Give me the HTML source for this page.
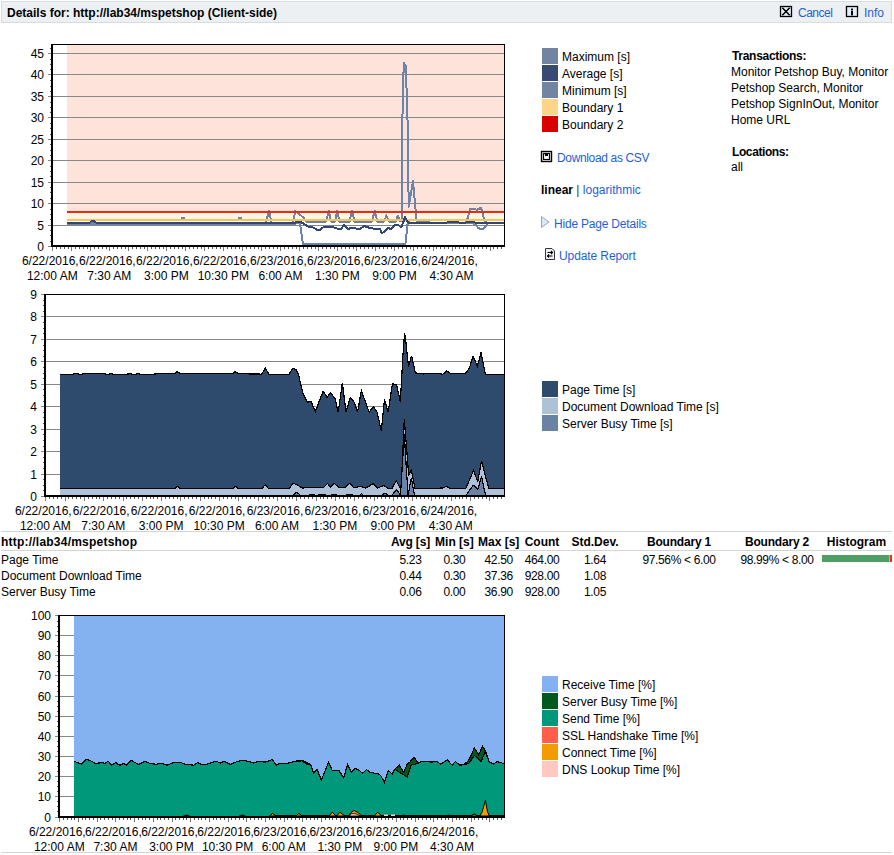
<!DOCTYPE html><html><head><meta charset="utf-8"><title>Details</title><style>
html,body{margin:0;padding:0;background:#fff;width:894px;height:855px;overflow:hidden;}
body{position:relative;font-family:'Liberation Sans',sans-serif;font-size:12px;color:#000;}
.t{position:absolute;white-space:nowrap;line-height:16px;font-size:12px;}
.b{font-weight:bold;}
.lnk{color:#1f5fd6;}
.sw{position:absolute;width:16px;height:16px;}
svg{position:absolute;left:0;top:0;overflow:visible;}
.ax{font-size:12px;fill:#000;}
</style></head><body>
<div style="position:absolute;left:1px;top:1px;width:889px;height:20px;background:#edf0f2;border:1px solid #d9dcdf;"></div>
<div class="t b" style="left:7px;top:5px;">Details for: http://lab34/mspetshop (Client-side)</div>
<svg width="894" height="30"><rect x="780.5" y="6.5" width="11" height="10" fill="#e3eefb" stroke="#000" stroke-width="1.3"/><path d="M782.3,7.8 L789.7,15.2 M789.7,7.8 L782.3,15.2" stroke="#000" stroke-width="1.6"/><rect x="846.5" y="6.5" width="11" height="10" fill="#e3eefb" stroke="#000" stroke-width="1.3"/><rect x="851" y="8.6" width="2" height="1.8" fill="#000"/><rect x="851" y="11" width="2" height="4.4" fill="#000"/></svg>
<div class="t lnk" style="left:798px;top:5px;letter-spacing:-0.5px;">Cancel</div>
<div class="t lnk" style="left:864px;top:5px;">Info</div>
<svg width="894" height="855">
<rect x="67" y="45" width="437" height="167" fill="#fde3d9"/><rect x="67" y="212" width="437" height="8" fill="#fef5e7"/><rect x="53" y="246" width="451" height="1" fill="#878787"/><rect x="53" y="225" width="451" height="1" fill="#878787"/><rect x="53" y="203" width="451" height="1" fill="#878787"/><rect x="53" y="182" width="451" height="1" fill="#878787"/><rect x="53" y="160" width="451" height="1" fill="#878787"/><rect x="53" y="139" width="451" height="1" fill="#878787"/><rect x="53" y="117" width="451" height="1" fill="#878787"/><rect x="53" y="96" width="451" height="1" fill="#878787"/><rect x="53" y="74" width="451" height="1" fill="#878787"/><rect x="53" y="53" width="451" height="1" fill="#878787"/><polyline points="67,222.5 266,222.5 268.9,211 271.6,222.5 293,222.5 295.3,211 297,212 303.8,218 306,221.5 326,221.5 328.8,211 331,221.5 335,221.5 337.2,211 339.5,221.5 349.5,221.5 352,211 354.5,221.5 372,221.5 374.7,211 377.5,221.5 384,221.5 386.4,215.5 389,221.5 395.5,221.5 398,215.5 400.5,221.5 401.8,221 402.6,102 403.8,63 406,66 406.8,100 408.2,140 408.6,207 413,181 416.7,222 430,222.5 466,222.5 467.4,219 470,209 474,208.5 477,210 481,207.5 484,219 486,222.5 504,222.5" fill="none" stroke="#6c84aa" stroke-width="2" stroke-linejoin="round" shape-rendering="crispEdges"/><polyline points="67,223.5 296,223.5 300,223 302.9,244 405.4,244 408,220 410,222.5 467,222.5 471,223 476,224 478,228 482,229.5 486,226 488,222.5 504,223.5" fill="none" stroke="#6c84aa" stroke-width="2" stroke-linejoin="round" shape-rendering="crispEdges"/><rect x="181" y="217" width="4" height="2" fill="#6c84aa"/><rect x="238" y="217" width="4" height="2" fill="#6c84aa"/><rect x="67" y="219" width="437" height="2" fill="#fdc450"/><rect x="67" y="211" width="437" height="2" fill="#ec2a0c"/><polyline points="67,222.5 90,222.5 91.5,221 94,221 95.5,222.5 295.7,222.5 297,221.5 300,221.5 308.7,226.8 313,227.5 317.6,230 320,230 323.9,226.8 330,226.5 341,229.5 344,224.5 348,229 353,227.5 359,229.5 364,226 370,228 376,229 380,229 382,233.5 388,228 391,229 395,225 398,224.5 401,227.5 403,223 405,217 408,222.5 447,222.5 448,221.5 458,221.5 459,222.5 466,222.5 467,221.5 474,221.5 475,222.5 504,222.5" fill="none" stroke="#2f4677" stroke-width="2" stroke-linejoin="round" shape-rendering="crispEdges"/><rect x="51" y="44" width="454" height="1" fill="#000"/><rect x="504" y="44" width="1" height="203" fill="#000"/><rect x="51" y="44" width="2" height="203" fill="#000"/><rect x="51" y="245" width="454" height="2" fill="#000"/><rect x="48" y="246" width="3" height="1" fill="#878787"/><text class="ax" x="44" y="251" text-anchor="end">0</text><rect x="48" y="225" width="3" height="1" fill="#878787"/><text class="ax" x="44" y="230" text-anchor="end">5</text><rect x="48" y="203" width="3" height="1" fill="#878787"/><text class="ax" x="44" y="208" text-anchor="end">10</text><rect x="48" y="182" width="3" height="1" fill="#878787"/><text class="ax" x="44" y="187" text-anchor="end">15</text><rect x="48" y="160" width="3" height="1" fill="#878787"/><text class="ax" x="44" y="165" text-anchor="end">20</text><rect x="48" y="139" width="3" height="1" fill="#878787"/><text class="ax" x="44" y="144" text-anchor="end">25</text><rect x="48" y="117" width="3" height="1" fill="#878787"/><text class="ax" x="44" y="122" text-anchor="end">30</text><rect x="48" y="96" width="3" height="1" fill="#878787"/><text class="ax" x="44" y="101" text-anchor="end">35</text><rect x="48" y="74" width="3" height="1" fill="#878787"/><text class="ax" x="44" y="79" text-anchor="end">40</text><rect x="48" y="53" width="3" height="1" fill="#878787"/><text class="ax" x="44" y="58" text-anchor="end">45</text><rect x="50" y="241" width="1" height="1" fill="#555"/><rect x="50" y="235" width="1" height="1" fill="#555"/><rect x="50" y="230" width="1" height="1" fill="#555"/><rect x="50" y="219" width="1" height="1" fill="#555"/><rect x="50" y="214" width="1" height="1" fill="#555"/><rect x="50" y="209" width="1" height="1" fill="#555"/><rect x="50" y="198" width="1" height="1" fill="#555"/><rect x="50" y="192" width="1" height="1" fill="#555"/><rect x="50" y="187" width="1" height="1" fill="#555"/><rect x="50" y="176" width="1" height="1" fill="#555"/><rect x="50" y="171" width="1" height="1" fill="#555"/><rect x="50" y="166" width="1" height="1" fill="#555"/><rect x="50" y="155" width="1" height="1" fill="#555"/><rect x="50" y="150" width="1" height="1" fill="#555"/><rect x="50" y="144" width="1" height="1" fill="#555"/><rect x="50" y="134" width="1" height="1" fill="#555"/><rect x="50" y="128" width="1" height="1" fill="#555"/><rect x="50" y="123" width="1" height="1" fill="#555"/><rect x="50" y="112" width="1" height="1" fill="#555"/><rect x="50" y="107" width="1" height="1" fill="#555"/><rect x="50" y="102" width="1" height="1" fill="#555"/><rect x="50" y="91" width="1" height="1" fill="#555"/><rect x="50" y="86" width="1" height="1" fill="#555"/><rect x="50" y="80" width="1" height="1" fill="#555"/><rect x="50" y="69" width="1" height="1" fill="#555"/><rect x="50" y="64" width="1" height="1" fill="#555"/><rect x="50" y="59" width="1" height="1" fill="#555"/><rect x="50" y="48" width="1" height="1" fill="#555"/><rect x="52" y="247" width="1" height="4" fill="#777"/><rect x="56" y="247" width="1" height="2" fill="#555"/><rect x="60" y="247" width="1" height="2" fill="#555"/><rect x="64" y="247" width="1" height="2" fill="#555"/><rect x="68" y="247" width="1" height="2" fill="#555"/><rect x="71" y="247" width="1" height="4" fill="#777"/><rect x="75" y="247" width="1" height="2" fill="#555"/><rect x="79" y="247" width="1" height="2" fill="#555"/><rect x="83" y="247" width="1" height="2" fill="#555"/><rect x="87" y="247" width="1" height="2" fill="#555"/><rect x="90" y="247" width="1" height="4" fill="#777"/><rect x="94" y="247" width="1" height="2" fill="#555"/><rect x="98" y="247" width="1" height="2" fill="#555"/><rect x="102" y="247" width="1" height="2" fill="#555"/><rect x="106" y="247" width="1" height="2" fill="#555"/><rect x="109" y="247" width="1" height="4" fill="#777"/><rect x="113" y="247" width="1" height="2" fill="#555"/><rect x="117" y="247" width="1" height="2" fill="#555"/><rect x="121" y="247" width="1" height="2" fill="#555"/><rect x="125" y="247" width="1" height="2" fill="#555"/><rect x="128" y="247" width="1" height="4" fill="#777"/><rect x="132" y="247" width="1" height="2" fill="#555"/><rect x="136" y="247" width="1" height="2" fill="#555"/><rect x="140" y="247" width="1" height="2" fill="#555"/><rect x="144" y="247" width="1" height="2" fill="#555"/><rect x="147" y="247" width="1" height="4" fill="#777"/><rect x="151" y="247" width="1" height="2" fill="#555"/><rect x="155" y="247" width="1" height="2" fill="#555"/><rect x="159" y="247" width="1" height="2" fill="#555"/><rect x="163" y="247" width="1" height="2" fill="#555"/><rect x="166" y="247" width="1" height="4" fill="#777"/><rect x="170" y="247" width="1" height="2" fill="#555"/><rect x="174" y="247" width="1" height="2" fill="#555"/><rect x="178" y="247" width="1" height="2" fill="#555"/><rect x="182" y="247" width="1" height="2" fill="#555"/><rect x="185" y="247" width="1" height="4" fill="#777"/><rect x="189" y="247" width="1" height="2" fill="#555"/><rect x="193" y="247" width="1" height="2" fill="#555"/><rect x="197" y="247" width="1" height="2" fill="#555"/><rect x="201" y="247" width="1" height="2" fill="#555"/><rect x="204" y="247" width="1" height="4" fill="#777"/><rect x="208" y="247" width="1" height="2" fill="#555"/><rect x="212" y="247" width="1" height="2" fill="#555"/><rect x="216" y="247" width="1" height="2" fill="#555"/><rect x="220" y="247" width="1" height="2" fill="#555"/><rect x="223" y="247" width="1" height="4" fill="#777"/><rect x="227" y="247" width="1" height="2" fill="#555"/><rect x="231" y="247" width="1" height="2" fill="#555"/><rect x="235" y="247" width="1" height="2" fill="#555"/><rect x="239" y="247" width="1" height="2" fill="#555"/><rect x="242" y="247" width="1" height="4" fill="#777"/><rect x="246" y="247" width="1" height="2" fill="#555"/><rect x="250" y="247" width="1" height="2" fill="#555"/><rect x="254" y="247" width="1" height="2" fill="#555"/><rect x="258" y="247" width="1" height="2" fill="#555"/><rect x="261" y="247" width="1" height="4" fill="#777"/><rect x="265" y="247" width="1" height="2" fill="#555"/><rect x="269" y="247" width="1" height="2" fill="#555"/><rect x="273" y="247" width="1" height="2" fill="#555"/><rect x="277" y="247" width="1" height="2" fill="#555"/><rect x="280" y="247" width="1" height="4" fill="#777"/><rect x="284" y="247" width="1" height="2" fill="#555"/><rect x="288" y="247" width="1" height="2" fill="#555"/><rect x="292" y="247" width="1" height="2" fill="#555"/><rect x="296" y="247" width="1" height="2" fill="#555"/><rect x="299" y="247" width="1" height="4" fill="#777"/><rect x="303" y="247" width="1" height="2" fill="#555"/><rect x="307" y="247" width="1" height="2" fill="#555"/><rect x="311" y="247" width="1" height="2" fill="#555"/><rect x="315" y="247" width="1" height="2" fill="#555"/><rect x="318" y="247" width="1" height="4" fill="#777"/><rect x="322" y="247" width="1" height="2" fill="#555"/><rect x="326" y="247" width="1" height="2" fill="#555"/><rect x="330" y="247" width="1" height="2" fill="#555"/><rect x="334" y="247" width="1" height="2" fill="#555"/><rect x="337" y="247" width="1" height="4" fill="#777"/><rect x="341" y="247" width="1" height="2" fill="#555"/><rect x="345" y="247" width="1" height="2" fill="#555"/><rect x="349" y="247" width="1" height="2" fill="#555"/><rect x="353" y="247" width="1" height="2" fill="#555"/><rect x="356" y="247" width="1" height="4" fill="#777"/><rect x="360" y="247" width="1" height="2" fill="#555"/><rect x="364" y="247" width="1" height="2" fill="#555"/><rect x="368" y="247" width="1" height="2" fill="#555"/><rect x="372" y="247" width="1" height="2" fill="#555"/><rect x="375" y="247" width="1" height="4" fill="#777"/><rect x="379" y="247" width="1" height="2" fill="#555"/><rect x="383" y="247" width="1" height="2" fill="#555"/><rect x="387" y="247" width="1" height="2" fill="#555"/><rect x="391" y="247" width="1" height="2" fill="#555"/><rect x="394" y="247" width="1" height="4" fill="#777"/><rect x="398" y="247" width="1" height="2" fill="#555"/><rect x="402" y="247" width="1" height="2" fill="#555"/><rect x="406" y="247" width="1" height="2" fill="#555"/><rect x="410" y="247" width="1" height="2" fill="#555"/><rect x="413" y="247" width="1" height="4" fill="#777"/><rect x="417" y="247" width="1" height="2" fill="#555"/><rect x="421" y="247" width="1" height="2" fill="#555"/><rect x="425" y="247" width="1" height="2" fill="#555"/><rect x="429" y="247" width="1" height="2" fill="#555"/><rect x="433" y="247" width="1" height="4" fill="#777"/><rect x="436" y="247" width="1" height="2" fill="#555"/><rect x="440" y="247" width="1" height="2" fill="#555"/><rect x="444" y="247" width="1" height="2" fill="#555"/><rect x="448" y="247" width="1" height="2" fill="#555"/><rect x="452" y="247" width="1" height="4" fill="#777"/><rect x="455" y="247" width="1" height="2" fill="#555"/><rect x="459" y="247" width="1" height="2" fill="#555"/><rect x="463" y="247" width="1" height="2" fill="#555"/><rect x="467" y="247" width="1" height="2" fill="#555"/><rect x="471" y="247" width="1" height="4" fill="#777"/><rect x="474" y="247" width="1" height="2" fill="#555"/><rect x="478" y="247" width="1" height="2" fill="#555"/><rect x="482" y="247" width="1" height="2" fill="#555"/><rect x="486" y="247" width="1" height="2" fill="#555"/><rect x="490" y="247" width="1" height="4" fill="#777"/><rect x="493" y="247" width="1" height="2" fill="#555"/><rect x="497" y="247" width="1" height="2" fill="#555"/><rect x="501" y="247" width="1" height="2" fill="#555"/><text class="ax" x="50.3" y="265" text-anchor="middle">6/22/2016,</text><text class="ax" x="52.3" y="280" text-anchor="middle">12:00 AM</text><text class="ax" x="107.33" y="265" text-anchor="middle">6/22/2016,</text><text class="ax" x="109.33" y="280" text-anchor="middle">7:30 AM</text><text class="ax" x="164.36" y="265" text-anchor="middle">6/22/2016,</text><text class="ax" x="166.36" y="280" text-anchor="middle">3:00 PM</text><text class="ax" x="221.39" y="265" text-anchor="middle">6/22/2016,</text><text class="ax" x="223.39" y="280" text-anchor="middle">10:30 PM</text><text class="ax" x="278.42" y="265" text-anchor="middle">6/23/2016,</text><text class="ax" x="280.42" y="280" text-anchor="middle">6:00 AM</text><text class="ax" x="335.45" y="265" text-anchor="middle">6/23/2016,</text><text class="ax" x="337.45" y="280" text-anchor="middle">1:30 PM</text><text class="ax" x="392.48" y="265" text-anchor="middle">6/23/2016,</text><text class="ax" x="394.48" y="280" text-anchor="middle">9:00 PM</text><text class="ax" x="449.51" y="265" text-anchor="middle">6/24/2016,</text><text class="ax" x="451.51" y="280" text-anchor="middle">4:30 AM</text>
<rect x="46" y="496" width="458" height="1" fill="#878787"/><rect x="46" y="474" width="458" height="1" fill="#878787"/><rect x="46" y="451" width="458" height="1" fill="#878787"/><rect x="46" y="429" width="458" height="1" fill="#878787"/><rect x="46" y="406" width="458" height="1" fill="#878787"/><rect x="46" y="384" width="458" height="1" fill="#878787"/><rect x="46" y="361" width="458" height="1" fill="#878787"/><rect x="46" y="339" width="458" height="1" fill="#878787"/><rect x="46" y="316" width="458" height="1" fill="#878787"/><polygon points="60,374.5 73.8,374.5 74,373.5 78.5,373.5 78.7,374.5 82,374.5 82.2,373.5 105.5,373.5 105.7,374.5 109,374.5 109.2,373.5 112.6,373.5 112.8,374.5 127.9,374.5 128.1,373.5 131.4,373.5 131.6,374.5 136,374.5 136.2,373.5 139.6,373.5 139.8,374.5 154.9,374.5 155.1,373.5 175,373.5 177,371.5 180,373.5 233,373.5 235,371.5 238,373.5 251,374 260,374 261.6,374.5 265.3,368.2 269,374.5 289,374.5 292.6,368.2 296.3,369.7 298.4,374.5 303.2,394 307.4,402.4 311,401.3 315.3,411.8 318.4,403.4 323.2,391.3 327.1,397.4 330.3,392.6 335,398.4 338.2,412.1 342.4,382.6 346,412.1 350.3,397.4 354.5,402.6 357.6,412.1 361.3,390.5 369.2,412.1 373.4,406.8 377.1,412.1 381.3,431 384.5,399.5 388.2,412.1 392.4,383.7 396.6,384.7 400.3,401.6 401.8,376.6 402.6,359.4 404.6,332.9 405.5,338.5 407.3,355.7 408.5,366.8 411.6,355.7 415.3,372.9 421.5,373.5 423.9,374.1 425.8,373.2 440.5,373.2 442.4,374.4 446.7,371.1 450.4,373.2 465.7,373.2 469.4,368 473.1,356.3 477.4,366.1 481.1,352.6 485.4,374.8 487.3,374.1 504,374.1 504,495 60,495" fill="#2e4a6c"/><polyline points="60,374.5 73.8,374.5 74,373.5 78.5,373.5 78.7,374.5 82,374.5 82.2,373.5 105.5,373.5 105.7,374.5 109,374.5 109.2,373.5 112.6,373.5 112.8,374.5 127.9,374.5 128.1,373.5 131.4,373.5 131.6,374.5 136,374.5 136.2,373.5 139.6,373.5 139.8,374.5 154.9,374.5 155.1,373.5 175,373.5 177,371.5 180,373.5 233,373.5 235,371.5 238,373.5 251,374 260,374 261.6,374.5 265.3,368.2 269,374.5 289,374.5 292.6,368.2 296.3,369.7 298.4,374.5 303.2,394 307.4,402.4 311,401.3 315.3,411.8 318.4,403.4 323.2,391.3 327.1,397.4 330.3,392.6 335,398.4 338.2,412.1 342.4,382.6 346,412.1 350.3,397.4 354.5,402.6 357.6,412.1 361.3,390.5 369.2,412.1 373.4,406.8 377.1,412.1 381.3,431 384.5,399.5 388.2,412.1 392.4,383.7 396.6,384.7 400.3,401.6 401.8,376.6 402.6,359.4 404.6,332.9 405.5,338.5 407.3,355.7 408.5,366.8 411.6,355.7 415.3,372.9 421.5,373.5 423.9,374.1 425.8,373.2 440.5,373.2 442.4,374.4 446.7,371.1 450.4,373.2 465.7,373.2 469.4,368 473.1,356.3 477.4,366.1 481.1,352.6 485.4,374.8 487.3,374.1 504,374.1" fill="none" stroke="#000" stroke-width="1.2" shape-rendering="crispEdges"/><polygon points="60,488.5 175,488.5 177,486 180,488.5 233,488.5 235,486 238,488.5 262,488.5 265.3,484.5 268.5,488.5 289.4,488.1 292.8,483.4 296.8,484.5 302.1,488.1 308.9,487.4 323.6,487.4 327.7,483.4 330.3,487.4 334.4,483.4 339.1,487.7 344.4,487.7 349.8,483.4 353.8,487.7 360.5,486.4 365.9,488.1 373.3,483.4 377.3,488.1 384,485.4 387.4,488.1 392.1,488.1 396.4,480.7 400.5,488.9 401.1,488.9 404.3,419.3 408.7,474.9 411.3,470.2 415.1,488.9 442.9,488 446.5,486.2 449.8,488.4 465.8,488.4 473.5,470.5 477.8,481.5 481.5,460.7 488.7,488.4 504,488.4 504,495 60,495" fill="#afc1d7"/><polyline points="60,488.5 175,488.5 177,486 180,488.5 233,488.5 235,486 238,488.5 262,488.5 265.3,484.5 268.5,488.5 289.4,488.1 292.8,483.4 296.8,484.5 302.1,488.1 308.9,487.4 323.6,487.4 327.7,483.4 330.3,487.4 334.4,483.4 339.1,487.7 344.4,487.7 349.8,483.4 353.8,487.7 360.5,486.4 365.9,488.1 373.3,483.4 377.3,488.1 384,485.4 387.4,488.1 392.1,488.1 396.4,480.7 400.5,488.9 401.1,488.9 404.3,419.3 408.7,474.9 411.3,470.2 415.1,488.9 442.9,488 446.5,486.2 449.8,488.4 465.8,488.4 473.5,470.5 477.8,481.5 481.5,460.7 488.7,488.4 504,488.4" fill="none" stroke="#000" stroke-width="1.2" shape-rendering="crispEdges"/><polygon points="60,495 293.4,495 296.8,492.1 300,495 360,495 361.5,493.5 363,495 382.7,495 384.7,492.8 387.4,495 392.3,495 396.4,489.5 400.5,495 404.3,434 406.3,468 408.1,495 411.3,478 414.5,495 466.2,495 473.5,485.1 477.8,489.5 481.5,476.4 485.5,495 504,495 504,495 60,495" fill="#6a83a4"/><path d="M293.4,495L296.8,492.1M296.8,492.1L300,495M360,495L361.5,493.5M361.5,493.5L363,495M382.7,495L384.7,492.8M384.7,492.8L387.4,495M392.3,495L396.4,489.5M396.4,489.5L400.5,495M400.5,495L404.3,434M404.3,434L406.3,468M406.3,468L408.1,495M408.1,495L411.3,478M411.3,478L414.5,495M466.2,495L473.5,485.1M473.5,485.1L477.8,489.5M477.8,489.5L481.5,476.4M481.5,476.4L485.5,495" fill="none" stroke="#000" stroke-width="1.2" shape-rendering="crispEdges"/><rect x="309" y="494" width="6" height="1.5" fill="#000"/><rect x="318" y="494" width="8" height="1.5" fill="#000"/><rect x="331" y="494" width="6" height="1.5" fill="#000"/><rect x="346" y="494" width="7" height="1.5" fill="#000"/><rect x="44" y="294" width="461" height="1" fill="#000"/><rect x="504" y="294" width="1" height="203" fill="#000"/><rect x="44" y="294" width="2" height="203" fill="#000"/><rect x="44" y="495" width="461" height="2" fill="#000"/><rect x="41" y="496" width="3" height="1" fill="#878787"/><text class="ax" x="37" y="501" text-anchor="end">0</text><rect x="41" y="474" width="3" height="1" fill="#878787"/><text class="ax" x="37" y="479" text-anchor="end">1</text><rect x="41" y="451" width="3" height="1" fill="#878787"/><text class="ax" x="37" y="456" text-anchor="end">2</text><rect x="41" y="429" width="3" height="1" fill="#878787"/><text class="ax" x="37" y="434" text-anchor="end">3</text><rect x="41" y="406" width="3" height="1" fill="#878787"/><text class="ax" x="37" y="411" text-anchor="end">4</text><rect x="41" y="384" width="3" height="1" fill="#878787"/><text class="ax" x="37" y="389" text-anchor="end">5</text><rect x="41" y="361" width="3" height="1" fill="#878787"/><text class="ax" x="37" y="366" text-anchor="end">6</text><rect x="41" y="339" width="3" height="1" fill="#878787"/><text class="ax" x="37" y="344" text-anchor="end">7</text><rect x="41" y="316" width="3" height="1" fill="#878787"/><text class="ax" x="37" y="321" text-anchor="end">8</text><rect x="41" y="294" width="3" height="1" fill="#878787"/><text class="ax" x="37" y="299" text-anchor="end">9</text><rect x="43" y="490" width="1" height="1" fill="#555"/><rect x="43" y="485" width="1" height="1" fill="#555"/><rect x="43" y="479" width="1" height="1" fill="#555"/><rect x="43" y="468" width="1" height="1" fill="#555"/><rect x="43" y="462" width="1" height="1" fill="#555"/><rect x="43" y="457" width="1" height="1" fill="#555"/><rect x="43" y="446" width="1" height="1" fill="#555"/><rect x="43" y="440" width="1" height="1" fill="#555"/><rect x="43" y="434" width="1" height="1" fill="#555"/><rect x="43" y="423" width="1" height="1" fill="#555"/><rect x="43" y="417" width="1" height="1" fill="#555"/><rect x="43" y="412" width="1" height="1" fill="#555"/><rect x="43" y="401" width="1" height="1" fill="#555"/><rect x="43" y="395" width="1" height="1" fill="#555"/><rect x="43" y="389" width="1" height="1" fill="#555"/><rect x="43" y="378" width="1" height="1" fill="#555"/><rect x="43" y="373" width="1" height="1" fill="#555"/><rect x="43" y="367" width="1" height="1" fill="#555"/><rect x="43" y="356" width="1" height="1" fill="#555"/><rect x="43" y="350" width="1" height="1" fill="#555"/><rect x="43" y="345" width="1" height="1" fill="#555"/><rect x="43" y="333" width="1" height="1" fill="#555"/><rect x="43" y="328" width="1" height="1" fill="#555"/><rect x="43" y="322" width="1" height="1" fill="#555"/><rect x="43" y="311" width="1" height="1" fill="#555"/><rect x="43" y="305" width="1" height="1" fill="#555"/><rect x="43" y="300" width="1" height="1" fill="#555"/><rect x="45" y="497" width="1" height="4" fill="#777"/><rect x="49" y="497" width="1" height="2" fill="#555"/><rect x="53" y="497" width="1" height="2" fill="#555"/><rect x="57" y="497" width="1" height="2" fill="#555"/><rect x="61" y="497" width="1" height="2" fill="#555"/><rect x="65" y="497" width="1" height="4" fill="#777"/><rect x="68" y="497" width="1" height="2" fill="#555"/><rect x="72" y="497" width="1" height="2" fill="#555"/><rect x="76" y="497" width="1" height="2" fill="#555"/><rect x="80" y="497" width="1" height="2" fill="#555"/><rect x="84" y="497" width="1" height="4" fill="#777"/><rect x="88" y="497" width="1" height="2" fill="#555"/><rect x="92" y="497" width="1" height="2" fill="#555"/><rect x="96" y="497" width="1" height="2" fill="#555"/><rect x="99" y="497" width="1" height="2" fill="#555"/><rect x="103" y="497" width="1" height="4" fill="#777"/><rect x="107" y="497" width="1" height="2" fill="#555"/><rect x="111" y="497" width="1" height="2" fill="#555"/><rect x="115" y="497" width="1" height="2" fill="#555"/><rect x="119" y="497" width="1" height="2" fill="#555"/><rect x="123" y="497" width="1" height="4" fill="#777"/><rect x="126" y="497" width="1" height="2" fill="#555"/><rect x="130" y="497" width="1" height="2" fill="#555"/><rect x="134" y="497" width="1" height="2" fill="#555"/><rect x="138" y="497" width="1" height="2" fill="#555"/><rect x="142" y="497" width="1" height="4" fill="#777"/><rect x="146" y="497" width="1" height="2" fill="#555"/><rect x="150" y="497" width="1" height="2" fill="#555"/><rect x="153" y="497" width="1" height="2" fill="#555"/><rect x="157" y="497" width="1" height="2" fill="#555"/><rect x="161" y="497" width="1" height="4" fill="#777"/><rect x="165" y="497" width="1" height="2" fill="#555"/><rect x="169" y="497" width="1" height="2" fill="#555"/><rect x="173" y="497" width="1" height="2" fill="#555"/><rect x="177" y="497" width="1" height="2" fill="#555"/><rect x="180" y="497" width="1" height="4" fill="#777"/><rect x="184" y="497" width="1" height="2" fill="#555"/><rect x="188" y="497" width="1" height="2" fill="#555"/><rect x="192" y="497" width="1" height="2" fill="#555"/><rect x="196" y="497" width="1" height="2" fill="#555"/><rect x="200" y="497" width="1" height="4" fill="#777"/><rect x="204" y="497" width="1" height="2" fill="#555"/><rect x="208" y="497" width="1" height="2" fill="#555"/><rect x="211" y="497" width="1" height="2" fill="#555"/><rect x="215" y="497" width="1" height="2" fill="#555"/><rect x="219" y="497" width="1" height="4" fill="#777"/><rect x="223" y="497" width="1" height="2" fill="#555"/><rect x="227" y="497" width="1" height="2" fill="#555"/><rect x="231" y="497" width="1" height="2" fill="#555"/><rect x="235" y="497" width="1" height="2" fill="#555"/><rect x="238" y="497" width="1" height="4" fill="#777"/><rect x="242" y="497" width="1" height="2" fill="#555"/><rect x="246" y="497" width="1" height="2" fill="#555"/><rect x="250" y="497" width="1" height="2" fill="#555"/><rect x="254" y="497" width="1" height="2" fill="#555"/><rect x="258" y="497" width="1" height="4" fill="#777"/><rect x="262" y="497" width="1" height="2" fill="#555"/><rect x="265" y="497" width="1" height="2" fill="#555"/><rect x="269" y="497" width="1" height="2" fill="#555"/><rect x="273" y="497" width="1" height="2" fill="#555"/><rect x="277" y="497" width="1" height="4" fill="#777"/><rect x="281" y="497" width="1" height="2" fill="#555"/><rect x="285" y="497" width="1" height="2" fill="#555"/><rect x="289" y="497" width="1" height="2" fill="#555"/><rect x="292" y="497" width="1" height="2" fill="#555"/><rect x="296" y="497" width="1" height="4" fill="#777"/><rect x="300" y="497" width="1" height="2" fill="#555"/><rect x="304" y="497" width="1" height="2" fill="#555"/><rect x="308" y="497" width="1" height="2" fill="#555"/><rect x="312" y="497" width="1" height="2" fill="#555"/><rect x="316" y="497" width="1" height="4" fill="#777"/><rect x="320" y="497" width="1" height="2" fill="#555"/><rect x="323" y="497" width="1" height="2" fill="#555"/><rect x="327" y="497" width="1" height="2" fill="#555"/><rect x="331" y="497" width="1" height="2" fill="#555"/><rect x="335" y="497" width="1" height="4" fill="#777"/><rect x="339" y="497" width="1" height="2" fill="#555"/><rect x="343" y="497" width="1" height="2" fill="#555"/><rect x="347" y="497" width="1" height="2" fill="#555"/><rect x="350" y="497" width="1" height="2" fill="#555"/><rect x="354" y="497" width="1" height="4" fill="#777"/><rect x="358" y="497" width="1" height="2" fill="#555"/><rect x="362" y="497" width="1" height="2" fill="#555"/><rect x="366" y="497" width="1" height="2" fill="#555"/><rect x="370" y="497" width="1" height="2" fill="#555"/><rect x="374" y="497" width="1" height="4" fill="#777"/><rect x="377" y="497" width="1" height="2" fill="#555"/><rect x="381" y="497" width="1" height="2" fill="#555"/><rect x="385" y="497" width="1" height="2" fill="#555"/><rect x="389" y="497" width="1" height="2" fill="#555"/><rect x="393" y="497" width="1" height="4" fill="#777"/><rect x="397" y="497" width="1" height="2" fill="#555"/><rect x="401" y="497" width="1" height="2" fill="#555"/><rect x="404" y="497" width="1" height="2" fill="#555"/><rect x="408" y="497" width="1" height="2" fill="#555"/><rect x="412" y="497" width="1" height="4" fill="#777"/><rect x="416" y="497" width="1" height="2" fill="#555"/><rect x="420" y="497" width="1" height="2" fill="#555"/><rect x="424" y="497" width="1" height="2" fill="#555"/><rect x="428" y="497" width="1" height="2" fill="#555"/><rect x="431" y="497" width="1" height="4" fill="#777"/><rect x="435" y="497" width="1" height="2" fill="#555"/><rect x="439" y="497" width="1" height="2" fill="#555"/><rect x="443" y="497" width="1" height="2" fill="#555"/><rect x="447" y="497" width="1" height="2" fill="#555"/><rect x="451" y="497" width="1" height="4" fill="#777"/><rect x="455" y="497" width="1" height="2" fill="#555"/><rect x="459" y="497" width="1" height="2" fill="#555"/><rect x="462" y="497" width="1" height="2" fill="#555"/><rect x="466" y="497" width="1" height="2" fill="#555"/><rect x="470" y="497" width="1" height="4" fill="#777"/><rect x="474" y="497" width="1" height="2" fill="#555"/><rect x="478" y="497" width="1" height="2" fill="#555"/><rect x="482" y="497" width="1" height="2" fill="#555"/><rect x="486" y="497" width="1" height="2" fill="#555"/><rect x="489" y="497" width="1" height="4" fill="#777"/><rect x="493" y="497" width="1" height="2" fill="#555"/><rect x="497" y="497" width="1" height="2" fill="#555"/><rect x="501" y="497" width="1" height="2" fill="#555"/><text class="ax" x="43.3" y="515" text-anchor="middle">6/22/2016,</text><text class="ax" x="45.3" y="530" text-anchor="middle">12:00 AM</text><text class="ax" x="101.23" y="515" text-anchor="middle">6/22/2016,</text><text class="ax" x="103.23" y="530" text-anchor="middle">7:30 AM</text><text class="ax" x="159.16" y="515" text-anchor="middle">6/22/2016,</text><text class="ax" x="161.16" y="530" text-anchor="middle">3:00 PM</text><text class="ax" x="217.09" y="515" text-anchor="middle">6/22/2016,</text><text class="ax" x="219.09" y="530" text-anchor="middle">10:30 PM</text><text class="ax" x="275.02" y="515" text-anchor="middle">6/23/2016,</text><text class="ax" x="277.02" y="530" text-anchor="middle">6:00 AM</text><text class="ax" x="332.95" y="515" text-anchor="middle">6/23/2016,</text><text class="ax" x="334.95" y="530" text-anchor="middle">1:30 PM</text><text class="ax" x="390.88" y="515" text-anchor="middle">6/23/2016,</text><text class="ax" x="392.88" y="530" text-anchor="middle">9:00 PM</text><text class="ax" x="448.81" y="515" text-anchor="middle">6/24/2016,</text><text class="ax" x="450.81" y="530" text-anchor="middle">4:30 AM</text>
<rect x="60" y="817" width="444" height="1" fill="#878787"/><rect x="60" y="796" width="444" height="1" fill="#878787"/><rect x="60" y="776" width="444" height="1" fill="#878787"/><rect x="60" y="756" width="444" height="1" fill="#878787"/><rect x="60" y="736" width="444" height="1" fill="#878787"/><rect x="60" y="716" width="444" height="1" fill="#878787"/><rect x="60" y="696" width="444" height="1" fill="#878787"/><rect x="60" y="675" width="444" height="1" fill="#878787"/><rect x="60" y="655" width="444" height="1" fill="#878787"/><rect x="60" y="635" width="444" height="1" fill="#878787"/><rect x="74" y="616" width="430" height="200" fill="#84b2f0"/><polygon points="74,761.2 77.4,762.6 81.4,764.2 86.1,759.5 90.1,760.4 95.5,763.5 102.2,762.6 104.9,763.5 108.3,761.2 111.6,765.2 115.6,762.6 119.7,765.2 123.7,763.5 126.4,764.8 131.1,760.4 138.5,764.4 145.2,761.2 149.9,763.5 155.9,764.2 161.3,763.5 167.3,765.2 173.4,762.6 181.4,762.8 185,764.2 193.7,765.2 197.8,762.6 201.1,764.2 206.5,764.2 215.9,761.2 220.6,763.1 223.9,761.2 230.6,764.4 237.3,761.5 242,760.4 248.1,761.2 253.5,763.1 257.5,761.5 265.5,762.1 272.2,759.5 276.3,765.2 279,763.5 288.4,763.1 295.1,761.5 300,760.2 302.2,760.2 306.7,762.8 310.6,764.2 313.4,772.9 317.3,769.6 321.3,780.2 328.5,762.3 332.4,770.7 339.1,770.7 343.6,778 347.5,764.5 351.5,772.4 354.8,768.5 358.2,769.6 362.6,773.3 366.6,769.6 369.9,772.4 378.3,774 380.5,775.2 384.5,782.4 388.4,770.7 392.3,774 395,768.9 399.3,765.2 403.6,772.2 407.3,764 409.8,762.1 414.1,757.2 417.8,762.8 421.5,761.5 427.6,761.5 431.9,762.1 436.2,761.2 440.5,764 447.3,760 452.2,765.2 455.3,761.5 459.6,765.2 463.9,764.6 468.8,760.3 474.4,748 478.7,754.8 482.6,746.2 486.1,752.3 489.1,762.1 493.4,764 497.1,761.5 503.3,763.4 504,763.4 504,816 74,816" fill="#005a1e"/><polyline points="74,761.2 77.4,762.6 81.4,764.2 86.1,759.5 90.1,760.4 95.5,763.5 102.2,762.6 104.9,763.5 108.3,761.2 111.6,765.2 115.6,762.6 119.7,765.2 123.7,763.5 126.4,764.8 131.1,760.4 138.5,764.4 145.2,761.2 149.9,763.5 155.9,764.2 161.3,763.5 167.3,765.2 173.4,762.6 181.4,762.8 185,764.2 193.7,765.2 197.8,762.6 201.1,764.2 206.5,764.2 215.9,761.2 220.6,763.1 223.9,761.2 230.6,764.4 237.3,761.5 242,760.4 248.1,761.2 253.5,763.1 257.5,761.5 265.5,762.1 272.2,759.5 276.3,765.2 279,763.5 288.4,763.1 295.1,761.5 300,760.2 302.2,760.2 306.7,762.8 310.6,764.2 313.4,772.9 317.3,769.6 321.3,780.2 328.5,762.3 332.4,770.7 339.1,770.7 343.6,778 347.5,764.5 351.5,772.4 354.8,768.5 358.2,769.6 362.6,773.3 366.6,769.6 369.9,772.4 378.3,774 380.5,775.2 384.5,782.4 388.4,770.7 392.3,774 395,768.9 399.3,765.2 403.6,772.2 407.3,764 409.8,762.1 414.1,757.2 417.8,762.8 421.5,761.5 427.6,761.5 431.9,762.1 436.2,761.2 440.5,764 447.3,760 452.2,765.2 455.3,761.5 459.6,765.2 463.9,764.6 468.8,760.3 474.4,748 478.7,754.8 482.6,746.2 486.1,752.3 489.1,762.1 493.4,764 497.1,761.5 503.3,763.4 504,763.4" fill="none" stroke="#000" stroke-width="1.2" shape-rendering="crispEdges"/><polygon points="74,761.2 77.4,762.6 81.4,764.2 86.1,759.5 90.1,760.4 95.5,763.5 102.2,762.6 104.9,763.5 108.3,761.2 111.6,765.2 115.6,762.6 119.7,765.2 123.7,763.5 126.4,764.8 131.1,760.4 138.5,764.4 145.2,761.2 149.9,763.5 155.9,764.2 161.3,763.5 167.3,765.2 173.4,762.6 181.4,762.8 185,764.2 193.7,765.2 197.8,762.6 201.1,764.2 206.5,764.2 215.9,761.2 220.6,763.1 223.9,761.2 230.6,764.4 237.3,761.5 242,760.4 248.1,761.2 253.5,763.1 257.5,761.5 265.5,762.1 272.2,759.5 276.3,765.2 279,763.5 288.4,763.1 295.1,761.5 301.8,760.8 306.7,764 310.6,764.5 313.4,772.9 317.3,769.6 321.3,780.2 328.5,762.3 332.4,770.7 339.1,770.7 343.6,778 347.5,764.5 351.5,772.4 354.8,768.5 358.2,769.6 362.6,773.3 366.6,769.6 369.9,772.4 378.3,774 380.5,775.2 384.5,782.4 388.4,770.7 392.3,774 395,769.5 407.3,776.9 411,765.2 417.8,763.4 421.5,761.5 427.6,761.5 431.9,762.1 436.2,761.2 440.5,764 447.3,760 452.2,765.2 455.3,761.5 459.6,765.2 463.9,764.6 468.8,763.4 474.4,755.4 481.1,761.5 485.4,751.7 489.1,762.1 493.4,764 497.1,761.5 503.3,763.4 504,763.4 504,816 74,816" fill="#00987a"/><polyline points="74,761.2 77.4,762.6 81.4,764.2 86.1,759.5 90.1,760.4 95.5,763.5 102.2,762.6 104.9,763.5 108.3,761.2 111.6,765.2 115.6,762.6 119.7,765.2 123.7,763.5 126.4,764.8 131.1,760.4 138.5,764.4 145.2,761.2 149.9,763.5 155.9,764.2 161.3,763.5 167.3,765.2 173.4,762.6 181.4,762.8 185,764.2 193.7,765.2 197.8,762.6 201.1,764.2 206.5,764.2 215.9,761.2 220.6,763.1 223.9,761.2 230.6,764.4 237.3,761.5 242,760.4 248.1,761.2 253.5,763.1 257.5,761.5 265.5,762.1 272.2,759.5 276.3,765.2 279,763.5 288.4,763.1 295.1,761.5 301.8,760.8 306.7,764 310.6,764.5 313.4,772.9 317.3,769.6 321.3,780.2 328.5,762.3 332.4,770.7 339.1,770.7 343.6,778 347.5,764.5 351.5,772.4 354.8,768.5 358.2,769.6 362.6,773.3 366.6,769.6 369.9,772.4 378.3,774 380.5,775.2 384.5,782.4 388.4,770.7 392.3,774 395,769.5 407.3,776.9 411,765.2 417.8,763.4 421.5,761.5 427.6,761.5 431.9,762.1 436.2,761.2 440.5,764 447.3,760 452.2,765.2 455.3,761.5 459.6,765.2 463.9,764.6 468.8,763.4 474.4,755.4 481.1,761.5 485.4,751.7 489.1,762.1 493.4,764 497.1,761.5 503.3,763.4 504,763.4" fill="none" stroke="#000" stroke-width="1.2" shape-rendering="crispEdges"/><rect x="74" y="815" width="430" height="1.2" fill="#000" opacity="0.0"/><polyline points="275,815.5 504,815.5" fill="none" stroke="#000" stroke-width="1.2" shape-rendering="crispEdges"/><polygon points="269.7,816 272.5,813.5 275.7,816" fill="#f29c00" stroke="#000" stroke-width="1"/><polygon points="296,816 298.8,813.5 302,816" fill="#f29c00" stroke="#000" stroke-width="1"/><polygon points="329,816 332.3,812.2 336,816" fill="#f29c00" stroke="#000" stroke-width="1"/><polygon points="336.7,816 339.9,812.2 344.6,816" fill="#f29c00" stroke="#000" stroke-width="1"/><polygon points="374.3,816 377.8,812.2 381.4,816" fill="#f29c00" stroke="#000" stroke-width="1"/><polygon points="471,816 474.2,814 477.5,816" fill="#f29c00" stroke="#000" stroke-width="1"/><polygon points="471,816 474.2,814 477.5,816" fill="#f29c00" stroke="#000" stroke-width="1"/><polygon points="348.5,816 351,812.5 354,810.5 358,812.5 361.8,816" fill="#f29c00" stroke="#000" stroke-width="1"/><polygon points="349.5,816 351.5,813.5 356,813.8 360.5,816" fill="#ffc8c0" stroke="#000" stroke-width="0.8"/><polygon points="479.9,816 482.2,811.7 485.4,800.3 487.5,811.7 489.3,816" fill="#f29c00" stroke="#000" stroke-width="1"/><polygon points="182.5,816 186.5,814.6 190.5,816" fill="#000"/><polygon points="238.4,816 242.4,814.6 246.4,816" fill="#000"/><polygon points="399.5,816 403.5,814.6 407.5,816" fill="#000"/><polygon points="444.2,816 448.2,814.6 452.2,816" fill="#000"/><rect x="384" y="814.5" width="4" height="1.5" fill="#ffc8c0"/><rect x="391" y="814.5" width="4" height="1.5" fill="#ffc8c0"/><rect x="58" y="615" width="447" height="1" fill="#000"/><rect x="504" y="615" width="1" height="203" fill="#000"/><rect x="58" y="615" width="2" height="203" fill="#000"/><rect x="58" y="816" width="447" height="2" fill="#000"/><rect x="55" y="817" width="3" height="1" fill="#878787"/><text class="ax" x="51" y="822" text-anchor="end">0</text><rect x="55" y="796" width="3" height="1" fill="#878787"/><text class="ax" x="51" y="801" text-anchor="end">10</text><rect x="55" y="776" width="3" height="1" fill="#878787"/><text class="ax" x="51" y="781" text-anchor="end">20</text><rect x="55" y="756" width="3" height="1" fill="#878787"/><text class="ax" x="51" y="761" text-anchor="end">30</text><rect x="55" y="736" width="3" height="1" fill="#878787"/><text class="ax" x="51" y="741" text-anchor="end">40</text><rect x="55" y="716" width="3" height="1" fill="#878787"/><text class="ax" x="51" y="721" text-anchor="end">50</text><rect x="55" y="696" width="3" height="1" fill="#878787"/><text class="ax" x="51" y="701" text-anchor="end">60</text><rect x="55" y="675" width="3" height="1" fill="#878787"/><text class="ax" x="51" y="680" text-anchor="end">70</text><rect x="55" y="655" width="3" height="1" fill="#878787"/><text class="ax" x="51" y="660" text-anchor="end">80</text><rect x="55" y="635" width="3" height="1" fill="#878787"/><text class="ax" x="51" y="640" text-anchor="end">90</text><rect x="55" y="615" width="3" height="1" fill="#878787"/><text class="ax" x="51" y="620" text-anchor="end">100</text><rect x="57" y="811" width="1" height="1" fill="#555"/><rect x="57" y="806" width="1" height="1" fill="#555"/><rect x="57" y="801" width="1" height="1" fill="#555"/><rect x="57" y="791" width="1" height="1" fill="#555"/><rect x="57" y="786" width="1" height="1" fill="#555"/><rect x="57" y="781" width="1" height="1" fill="#555"/><rect x="57" y="771" width="1" height="1" fill="#555"/><rect x="57" y="766" width="1" height="1" fill="#555"/><rect x="57" y="761" width="1" height="1" fill="#555"/><rect x="57" y="751" width="1" height="1" fill="#555"/><rect x="57" y="746" width="1" height="1" fill="#555"/><rect x="57" y="741" width="1" height="1" fill="#555"/><rect x="57" y="731" width="1" height="1" fill="#555"/><rect x="57" y="726" width="1" height="1" fill="#555"/><rect x="57" y="721" width="1" height="1" fill="#555"/><rect x="57" y="711" width="1" height="1" fill="#555"/><rect x="57" y="706" width="1" height="1" fill="#555"/><rect x="57" y="701" width="1" height="1" fill="#555"/><rect x="57" y="691" width="1" height="1" fill="#555"/><rect x="57" y="686" width="1" height="1" fill="#555"/><rect x="57" y="681" width="1" height="1" fill="#555"/><rect x="57" y="671" width="1" height="1" fill="#555"/><rect x="57" y="666" width="1" height="1" fill="#555"/><rect x="57" y="661" width="1" height="1" fill="#555"/><rect x="57" y="651" width="1" height="1" fill="#555"/><rect x="57" y="646" width="1" height="1" fill="#555"/><rect x="57" y="641" width="1" height="1" fill="#555"/><rect x="57" y="631" width="1" height="1" fill="#555"/><rect x="57" y="626" width="1" height="1" fill="#555"/><rect x="57" y="621" width="1" height="1" fill="#555"/><rect x="59" y="818" width="1" height="4" fill="#777"/><rect x="63" y="818" width="1" height="2" fill="#555"/><rect x="67" y="818" width="1" height="2" fill="#555"/><rect x="71" y="818" width="1" height="2" fill="#555"/><rect x="74" y="818" width="1" height="2" fill="#555"/><rect x="78" y="818" width="1" height="4" fill="#777"/><rect x="82" y="818" width="1" height="2" fill="#555"/><rect x="85" y="818" width="1" height="2" fill="#555"/><rect x="89" y="818" width="1" height="2" fill="#555"/><rect x="93" y="818" width="1" height="2" fill="#555"/><rect x="97" y="818" width="1" height="4" fill="#777"/><rect x="100" y="818" width="1" height="2" fill="#555"/><rect x="104" y="818" width="1" height="2" fill="#555"/><rect x="108" y="818" width="1" height="2" fill="#555"/><rect x="112" y="818" width="1" height="2" fill="#555"/><rect x="115" y="818" width="1" height="4" fill="#777"/><rect x="119" y="818" width="1" height="2" fill="#555"/><rect x="123" y="818" width="1" height="2" fill="#555"/><rect x="127" y="818" width="1" height="2" fill="#555"/><rect x="130" y="818" width="1" height="2" fill="#555"/><rect x="134" y="818" width="1" height="4" fill="#777"/><rect x="138" y="818" width="1" height="2" fill="#555"/><rect x="142" y="818" width="1" height="2" fill="#555"/><rect x="145" y="818" width="1" height="2" fill="#555"/><rect x="149" y="818" width="1" height="2" fill="#555"/><rect x="153" y="818" width="1" height="4" fill="#777"/><rect x="157" y="818" width="1" height="2" fill="#555"/><rect x="160" y="818" width="1" height="2" fill="#555"/><rect x="164" y="818" width="1" height="2" fill="#555"/><rect x="168" y="818" width="1" height="2" fill="#555"/><rect x="172" y="818" width="1" height="4" fill="#777"/><rect x="175" y="818" width="1" height="2" fill="#555"/><rect x="179" y="818" width="1" height="2" fill="#555"/><rect x="183" y="818" width="1" height="2" fill="#555"/><rect x="186" y="818" width="1" height="2" fill="#555"/><rect x="190" y="818" width="1" height="4" fill="#777"/><rect x="194" y="818" width="1" height="2" fill="#555"/><rect x="198" y="818" width="1" height="2" fill="#555"/><rect x="201" y="818" width="1" height="2" fill="#555"/><rect x="205" y="818" width="1" height="2" fill="#555"/><rect x="209" y="818" width="1" height="4" fill="#777"/><rect x="213" y="818" width="1" height="2" fill="#555"/><rect x="216" y="818" width="1" height="2" fill="#555"/><rect x="220" y="818" width="1" height="2" fill="#555"/><rect x="224" y="818" width="1" height="2" fill="#555"/><rect x="228" y="818" width="1" height="4" fill="#777"/><rect x="231" y="818" width="1" height="2" fill="#555"/><rect x="235" y="818" width="1" height="2" fill="#555"/><rect x="239" y="818" width="1" height="2" fill="#555"/><rect x="243" y="818" width="1" height="2" fill="#555"/><rect x="246" y="818" width="1" height="4" fill="#777"/><rect x="250" y="818" width="1" height="2" fill="#555"/><rect x="254" y="818" width="1" height="2" fill="#555"/><rect x="258" y="818" width="1" height="2" fill="#555"/><rect x="261" y="818" width="1" height="2" fill="#555"/><rect x="265" y="818" width="1" height="4" fill="#777"/><rect x="269" y="818" width="1" height="2" fill="#555"/><rect x="272" y="818" width="1" height="2" fill="#555"/><rect x="276" y="818" width="1" height="2" fill="#555"/><rect x="280" y="818" width="1" height="2" fill="#555"/><rect x="284" y="818" width="1" height="4" fill="#777"/><rect x="287" y="818" width="1" height="2" fill="#555"/><rect x="291" y="818" width="1" height="2" fill="#555"/><rect x="295" y="818" width="1" height="2" fill="#555"/><rect x="299" y="818" width="1" height="2" fill="#555"/><rect x="302" y="818" width="1" height="4" fill="#777"/><rect x="306" y="818" width="1" height="2" fill="#555"/><rect x="310" y="818" width="1" height="2" fill="#555"/><rect x="314" y="818" width="1" height="2" fill="#555"/><rect x="317" y="818" width="1" height="2" fill="#555"/><rect x="321" y="818" width="1" height="4" fill="#777"/><rect x="325" y="818" width="1" height="2" fill="#555"/><rect x="329" y="818" width="1" height="2" fill="#555"/><rect x="332" y="818" width="1" height="2" fill="#555"/><rect x="336" y="818" width="1" height="2" fill="#555"/><rect x="340" y="818" width="1" height="4" fill="#777"/><rect x="344" y="818" width="1" height="2" fill="#555"/><rect x="347" y="818" width="1" height="2" fill="#555"/><rect x="351" y="818" width="1" height="2" fill="#555"/><rect x="355" y="818" width="1" height="2" fill="#555"/><rect x="358" y="818" width="1" height="4" fill="#777"/><rect x="362" y="818" width="1" height="2" fill="#555"/><rect x="366" y="818" width="1" height="2" fill="#555"/><rect x="370" y="818" width="1" height="2" fill="#555"/><rect x="373" y="818" width="1" height="2" fill="#555"/><rect x="377" y="818" width="1" height="4" fill="#777"/><rect x="381" y="818" width="1" height="2" fill="#555"/><rect x="385" y="818" width="1" height="2" fill="#555"/><rect x="388" y="818" width="1" height="2" fill="#555"/><rect x="392" y="818" width="1" height="2" fill="#555"/><rect x="396" y="818" width="1" height="4" fill="#777"/><rect x="400" y="818" width="1" height="2" fill="#555"/><rect x="403" y="818" width="1" height="2" fill="#555"/><rect x="407" y="818" width="1" height="2" fill="#555"/><rect x="411" y="818" width="1" height="2" fill="#555"/><rect x="415" y="818" width="1" height="4" fill="#777"/><rect x="418" y="818" width="1" height="2" fill="#555"/><rect x="422" y="818" width="1" height="2" fill="#555"/><rect x="426" y="818" width="1" height="2" fill="#555"/><rect x="430" y="818" width="1" height="2" fill="#555"/><rect x="433" y="818" width="1" height="4" fill="#777"/><rect x="437" y="818" width="1" height="2" fill="#555"/><rect x="441" y="818" width="1" height="2" fill="#555"/><rect x="445" y="818" width="1" height="2" fill="#555"/><rect x="448" y="818" width="1" height="2" fill="#555"/><rect x="452" y="818" width="1" height="4" fill="#777"/><rect x="456" y="818" width="1" height="2" fill="#555"/><rect x="459" y="818" width="1" height="2" fill="#555"/><rect x="463" y="818" width="1" height="2" fill="#555"/><rect x="467" y="818" width="1" height="2" fill="#555"/><rect x="471" y="818" width="1" height="4" fill="#777"/><rect x="474" y="818" width="1" height="2" fill="#555"/><rect x="478" y="818" width="1" height="2" fill="#555"/><rect x="482" y="818" width="1" height="2" fill="#555"/><rect x="486" y="818" width="1" height="2" fill="#555"/><rect x="489" y="818" width="1" height="4" fill="#777"/><rect x="493" y="818" width="1" height="2" fill="#555"/><rect x="497" y="818" width="1" height="2" fill="#555"/><rect x="501" y="818" width="1" height="2" fill="#555"/><text class="ax" x="57.3" y="836" text-anchor="middle">6/22/2016,</text><text class="ax" x="59.3" y="851" text-anchor="middle">12:00 AM</text><text class="ax" x="113.4" y="836" text-anchor="middle">6/22/2016,</text><text class="ax" x="115.4" y="851" text-anchor="middle">7:30 AM</text><text class="ax" x="169.5" y="836" text-anchor="middle">6/22/2016,</text><text class="ax" x="171.5" y="851" text-anchor="middle">3:00 PM</text><text class="ax" x="225.6" y="836" text-anchor="middle">6/22/2016,</text><text class="ax" x="227.6" y="851" text-anchor="middle">10:30 PM</text><text class="ax" x="281.7" y="836" text-anchor="middle">6/23/2016,</text><text class="ax" x="283.7" y="851" text-anchor="middle">6:00 AM</text><text class="ax" x="337.8" y="836" text-anchor="middle">6/23/2016,</text><text class="ax" x="339.8" y="851" text-anchor="middle">1:30 PM</text><text class="ax" x="393.9" y="836" text-anchor="middle">6/23/2016,</text><text class="ax" x="395.9" y="851" text-anchor="middle">9:00 PM</text><text class="ax" x="450" y="836" text-anchor="middle">6/24/2016,</text><text class="ax" x="452" y="851" text-anchor="middle">4:30 AM</text>
</svg>
<div class="sw" style="left:542px;top:48px;background:#7384a3;"></div>
<div class="t " style="left:562px;top:49px;">Maximum [s]</div>
<div class="sw" style="left:542px;top:65px;background:#374a73;"></div>
<div class="t " style="left:562px;top:66px;">Average [s]</div>
<div class="sw" style="left:542px;top:82px;background:#7384a3;"></div>
<div class="t " style="left:562px;top:83px;">Minimum [s]</div>
<div class="sw" style="left:542px;top:99px;background:#fdd586;"></div>
<div class="t " style="left:562px;top:100px;">Boundary 1</div>
<div class="sw" style="left:542px;top:116px;background:#db0000;"></div>
<div class="t " style="left:562px;top:117px;">Boundary 2</div>
<svg width="894" height="300"><rect x="541.5" y="151.5" width="10" height="10" fill="#fff" stroke="#000" stroke-width="1.4"/><rect x="543.5" y="153.5" width="6" height="6" fill="#fff" stroke="#000" stroke-width="1.2"/><rect x="545" y="153" width="3" height="3" fill="#000"/><polygon points="541.5,216.5 549,222 541.5,227.5" fill="#dde8f6" stroke="#9aa6b5" stroke-width="1"/><path d="M545.5,248.5 L552,248.5 L554.5,251 L554.5,259.5 L545.5,259.5 Z" fill="#eef2f8" stroke="#333" stroke-width="1"/><path d="M547.5,252.5 L552,252.5 M551,251 L552.5,252.5 L551,254 M552.5,256 L548,256 M549,254.5 L547.5,256 L549,257.5" fill="none" stroke="#000" stroke-width="1.1"/></svg>
<div class="t lnk" style="left:557px;top:150px;letter-spacing:-0.35px;">Download as CSV</div>
<div class="t" style="left:541px;top:182px;"><b>linear</b> <span style="color:#333">|</span> <span class="lnk">logarithmic</span></div>
<div class="t lnk" style="left:554px;top:216px;letter-spacing:-0.2px;">Hide Page Details</div>
<div class="t lnk" style="left:559px;top:248px;letter-spacing:-0.1px;">Update Report</div>
<div class="t b" style="left:732px;top:48px;letter-spacing:-0.3px;">Transactions:</div>
<div class="t " style="left:731px;top:64px;">Monitor Petshop Buy, Monitor</div>
<div class="t " style="left:731px;top:80px;">Petshop Search, Monitor</div>
<div class="t " style="left:731px;top:96px;">Petshop SignInOut, Monitor</div>
<div class="t " style="left:731px;top:112px;">Home URL</div>
<div class="t b" style="left:732px;top:144px;letter-spacing:-0.4px;">Locations:</div>
<div class="t " style="left:731px;top:159px;">all</div>
<div class="sw" style="left:542px;top:381px;background:#2e4a6c;"></div>
<div class="t " style="left:562px;top:382px;">Page Time [s]</div>
<div class="sw" style="left:542px;top:398px;background:#afc1d7;"></div>
<div class="t " style="left:562px;top:399px;">Document Download Time [s]</div>
<div class="sw" style="left:542px;top:415px;background:#6a83a4;"></div>
<div class="t " style="left:562px;top:416px;">Server Busy Time [s]</div>
<div class="sw" style="left:542px;top:676px;background:#84b2f0;"></div>
<div class="t " style="left:562px;top:677px;">Receive Time [%]</div>
<div class="sw" style="left:542px;top:693px;background:#005a1e;"></div>
<div class="t " style="left:562px;top:694px;">Server Busy Time [%]</div>
<div class="sw" style="left:542px;top:710px;background:#00987a;"></div>
<div class="t " style="left:562px;top:711px;">Send Time [%]</div>
<div class="sw" style="left:542px;top:727px;background:#ff5f4a;"></div>
<div class="t " style="left:562px;top:728px;">SSL Handshake Time [%]</div>
<div class="sw" style="left:542px;top:744px;background:#f29c00;"></div>
<div class="t " style="left:562px;top:745px;">Connect Time [%]</div>
<div class="sw" style="left:542px;top:761px;background:#ffc8c0;"></div>
<div class="t " style="left:562px;top:762px;">DNS Lookup Time [%]</div>
<div style="position:absolute;left:1px;top:531px;width:891px;height:1px;background:#d4d4d4;"></div>
<div style="position:absolute;left:1px;top:550px;width:891px;height:1px;background:#d4d4d4;"></div>
<div class="t b" style="left:1px;top:534px;letter-spacing:0.22px;">http://lab34/mspetshop</div>
<div class="t b" style="left:310.5px;top:534px;width:200px;text-align:center;letter-spacing:-0.15px;">Avg [s]</div>
<div class="t b" style="left:354.4px;top:534px;width:200px;text-align:center;letter-spacing:0px;">Min [s]</div>
<div class="t b" style="left:398.7px;top:534px;width:200px;text-align:center;letter-spacing:0px;">Max [s]</div>
<div class="t b" style="left:442px;top:534px;width:200px;text-align:center;letter-spacing:0px;">Count</div>
<div class="t b" style="left:495px;top:534px;width:200px;text-align:center;letter-spacing:0px;">Std.Dev.</div>
<div class="t b" style="left:579px;top:534px;width:200px;text-align:center;letter-spacing:-0.2px;">Boundary 1</div>
<div class="t b" style="left:677px;top:534px;width:200px;text-align:center;letter-spacing:-0.2px;">Boundary 2</div>
<div class="t b" style="left:756.4px;top:534px;width:200px;text-align:center;letter-spacing:0px;">Histogram</div>
<div class="t " style="left:1px;top:552px;">Page Time</div>
<div class="t " style="left:310.5px;top:552px;width:200px;text-align:center;letter-spacing:-0.35px;">5.23</div>
<div class="t " style="left:354.4px;top:552px;width:200px;text-align:center;letter-spacing:-0.35px;">0.30</div>
<div class="t " style="left:398.7px;top:552px;width:200px;text-align:center;letter-spacing:-0.35px;">42.50</div>
<div class="t " style="left:442px;top:552px;width:200px;text-align:center;letter-spacing:-0.35px;">464.00</div>
<div class="t " style="left:495px;top:552px;width:200px;text-align:center;letter-spacing:-0.35px;">1.64</div>
<div class="t " style="left:579px;top:552px;width:200px;text-align:center;letter-spacing:-0.35px;">97.56% &lt; 6.00</div>
<div class="t " style="left:677px;top:552px;width:200px;text-align:center;letter-spacing:-0.35px;">98.99% &lt; 8.00</div>
<div class="t " style="left:1px;top:568px;">Document Download Time</div>
<div class="t " style="left:310.5px;top:568px;width:200px;text-align:center;letter-spacing:-0.35px;">0.44</div>
<div class="t " style="left:354.4px;top:568px;width:200px;text-align:center;letter-spacing:-0.35px;">0.30</div>
<div class="t " style="left:398.7px;top:568px;width:200px;text-align:center;letter-spacing:-0.35px;">37.36</div>
<div class="t " style="left:442px;top:568px;width:200px;text-align:center;letter-spacing:-0.35px;">928.00</div>
<div class="t " style="left:495px;top:568px;width:200px;text-align:center;letter-spacing:-0.35px;">1.08</div>
<div class="t " style="left:1px;top:584px;">Server Busy Time</div>
<div class="t " style="left:310.5px;top:584px;width:200px;text-align:center;letter-spacing:-0.35px;">0.06</div>
<div class="t " style="left:354.4px;top:584px;width:200px;text-align:center;letter-spacing:-0.35px;">0.00</div>
<div class="t " style="left:398.7px;top:584px;width:200px;text-align:center;letter-spacing:-0.35px;">36.90</div>
<div class="t " style="left:442px;top:584px;width:200px;text-align:center;letter-spacing:-0.35px;">928.00</div>
<div class="t " style="left:495px;top:584px;width:200px;text-align:center;letter-spacing:-0.35px;">1.05</div>
<div style="position:absolute;left:822px;top:555px;width:67px;height:7px;background:#4f9e63;"></div>
<div style="position:absolute;left:889px;top:555px;width:1px;height:7px;background:#f0b030;"></div>
<div style="position:absolute;left:890px;top:555px;width:2px;height:7px;background:#e8321e;"></div>
<div style="position:absolute;left:1px;top:852px;width:891px;height:1px;background:#d4d4d4;"></div>
</body></html>
